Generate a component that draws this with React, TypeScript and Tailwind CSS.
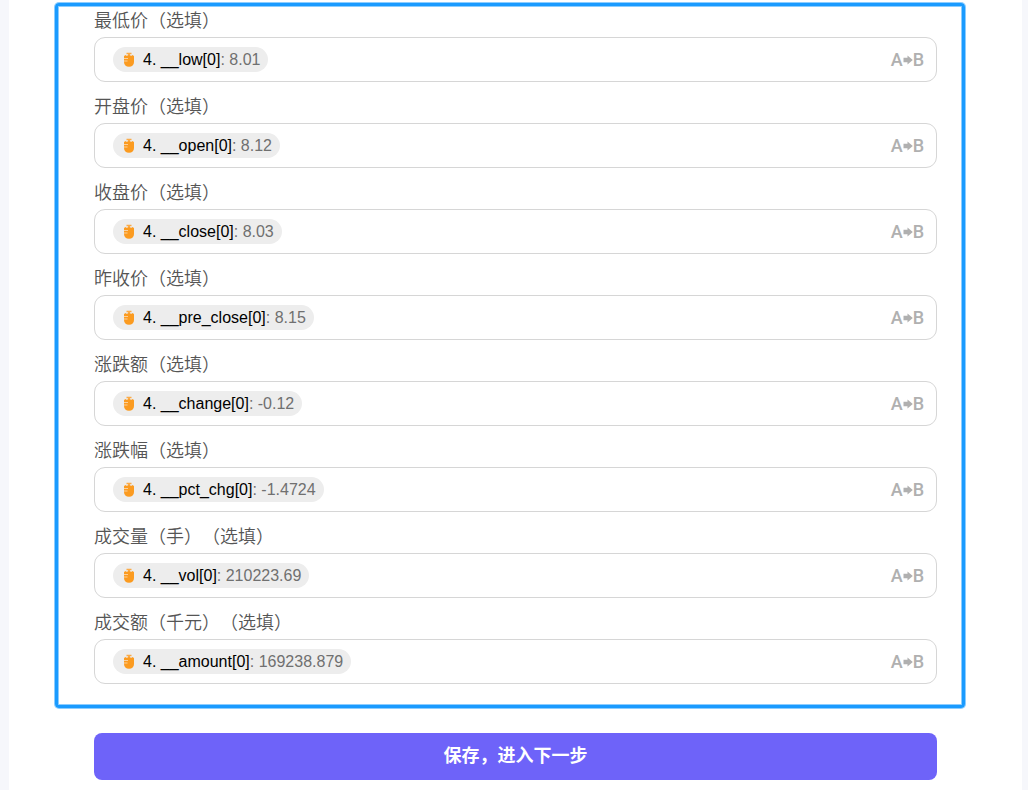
type Field = {
  id: string;
  label: string;
  variable: string;
  value: string;
};

const fields: Field[] = [
  { id: "low", label: "最低价（选填）", variable: "4. __low[0]", value: "8.01" },
  { id: "open", label: "开盘价（选填）", variable: "4. __open[0]", value: "8.12" },
  { id: "close", label: "收盘价（选填）", variable: "4. __close[0]", value: "8.03" },
  { id: "pre_close", label: "昨收价（选填）", variable: "4. __pre_close[0]", value: "8.15" },
  { id: "change", label: "涨跌额（选填）", variable: "4. __change[0]", value: "-0.12" },
  { id: "pct_chg", label: "涨跌幅（选填）", variable: "4. __pct_chg[0]", value: "-1.4724" },
  { id: "vol", label: "成交量（手）（选填）", variable: "4. __vol[0]", value: "210223.69" },
  { id: "amount", label: "成交额（千元）（选填）", variable: "4. __amount[0]", value: "169238.879" },
];

function SourceIcon() {
  return (
    <svg width="12" height="16" viewBox="0 0 12 16" className="shrink-0" aria-hidden="true">
      <path d="M3.5 0.8h5v1.4H7V4H5V2.2H3.5z" fill="#fbab48" />
      <path
        d="M1 4.2 2.2 3l1.2.8C5 3 7 3 8.6 3.8L9.8 3 11 4.2V10c0 3-2 4.8-5 4.8S1 13 1 10z"
        fill="#fb9b20"
      />
      <path d="M1 6.5h4M1 9h3.5" stroke="#fdd09a" strokeWidth="1" />
    </svg>
  );
}

function MapArrow() {
  return (
    <svg width="10" height="10" viewBox="0 0 10 10" className="shrink-0" aria-hidden="true">
      <path d="M0.5 2.7h4V0.5L9.8 5 4.5 9.5V7.3h-4z" fill="currentColor" />
    </svg>
  );
}

function MappingField({ id, label, variable, value }: Field) {
  return (
    <div>
      <label
        htmlFor={id}
        className="block text-[18px] leading-6 font-[350] text-[#555] [text-spacing-trim:space-all]"
      >
        {label}
      </label>
      <div className="mt-1 flex h-[45px] items-center rounded-[11px] border border-[#d6d6d6] bg-white pr-3 pl-[18px]">
        <span className="flex h-[25px] items-center rounded-full bg-[#ededed] pr-2 pl-[10px] text-base whitespace-pre">
          <SourceIcon />
          <span className="ml-2 text-black">{variable}</span>
          <span className="text-[#707070]">: {value}</span>
        </span>
        <input id={id} type="text" className="h-full min-w-0 flex-1 bg-transparent px-1 outline-none" />
        <button
          type="button"
          aria-label="字段映射"
          className="flex items-center text-[18px] leading-6 text-[#b0b0b0] font-['Roboto','Liberation_Sans',sans-serif] font-medium"
        >
          <span>A</span>
          <MapArrow />
          <span>B</span>
        </button>
      </div>
    </div>
  );
}

export default function App() {
  return (
    <div className="min-h-screen bg-[#f6f7fb] pr-[6px] pl-[9px] font-['Liberation_Sans','Noto_Sans_CJK_SC',sans-serif]">
      <form
        className="min-h-screen bg-white pt-[3px] pr-[57px] pb-[10px] pl-[46px]"
        onSubmit={(e) => e.preventDefault()}
      >
        <div className="flex flex-col gap-[13px] rounded-[4px] border-3 border-[#1a9bff] pt-[3px] pr-[25px] pb-[21px] pl-9 ring-1 ring-[#8ccdff] inset-ring inset-ring-[#8ccdff]">
          {fields.map((field) => (
            <MappingField key={field.id} {...field} />
          ))}
        </div>
        <button
          type="submit"
          className="mt-[25px] ml-[39px] flex h-[47px] w-[calc(100%-67px)] items-center justify-center rounded-lg bg-[#6e63f9] text-[18px] font-bold text-white"
        >
          保存，进入下一步
        </button>
      </form>
    </div>
  );
}
